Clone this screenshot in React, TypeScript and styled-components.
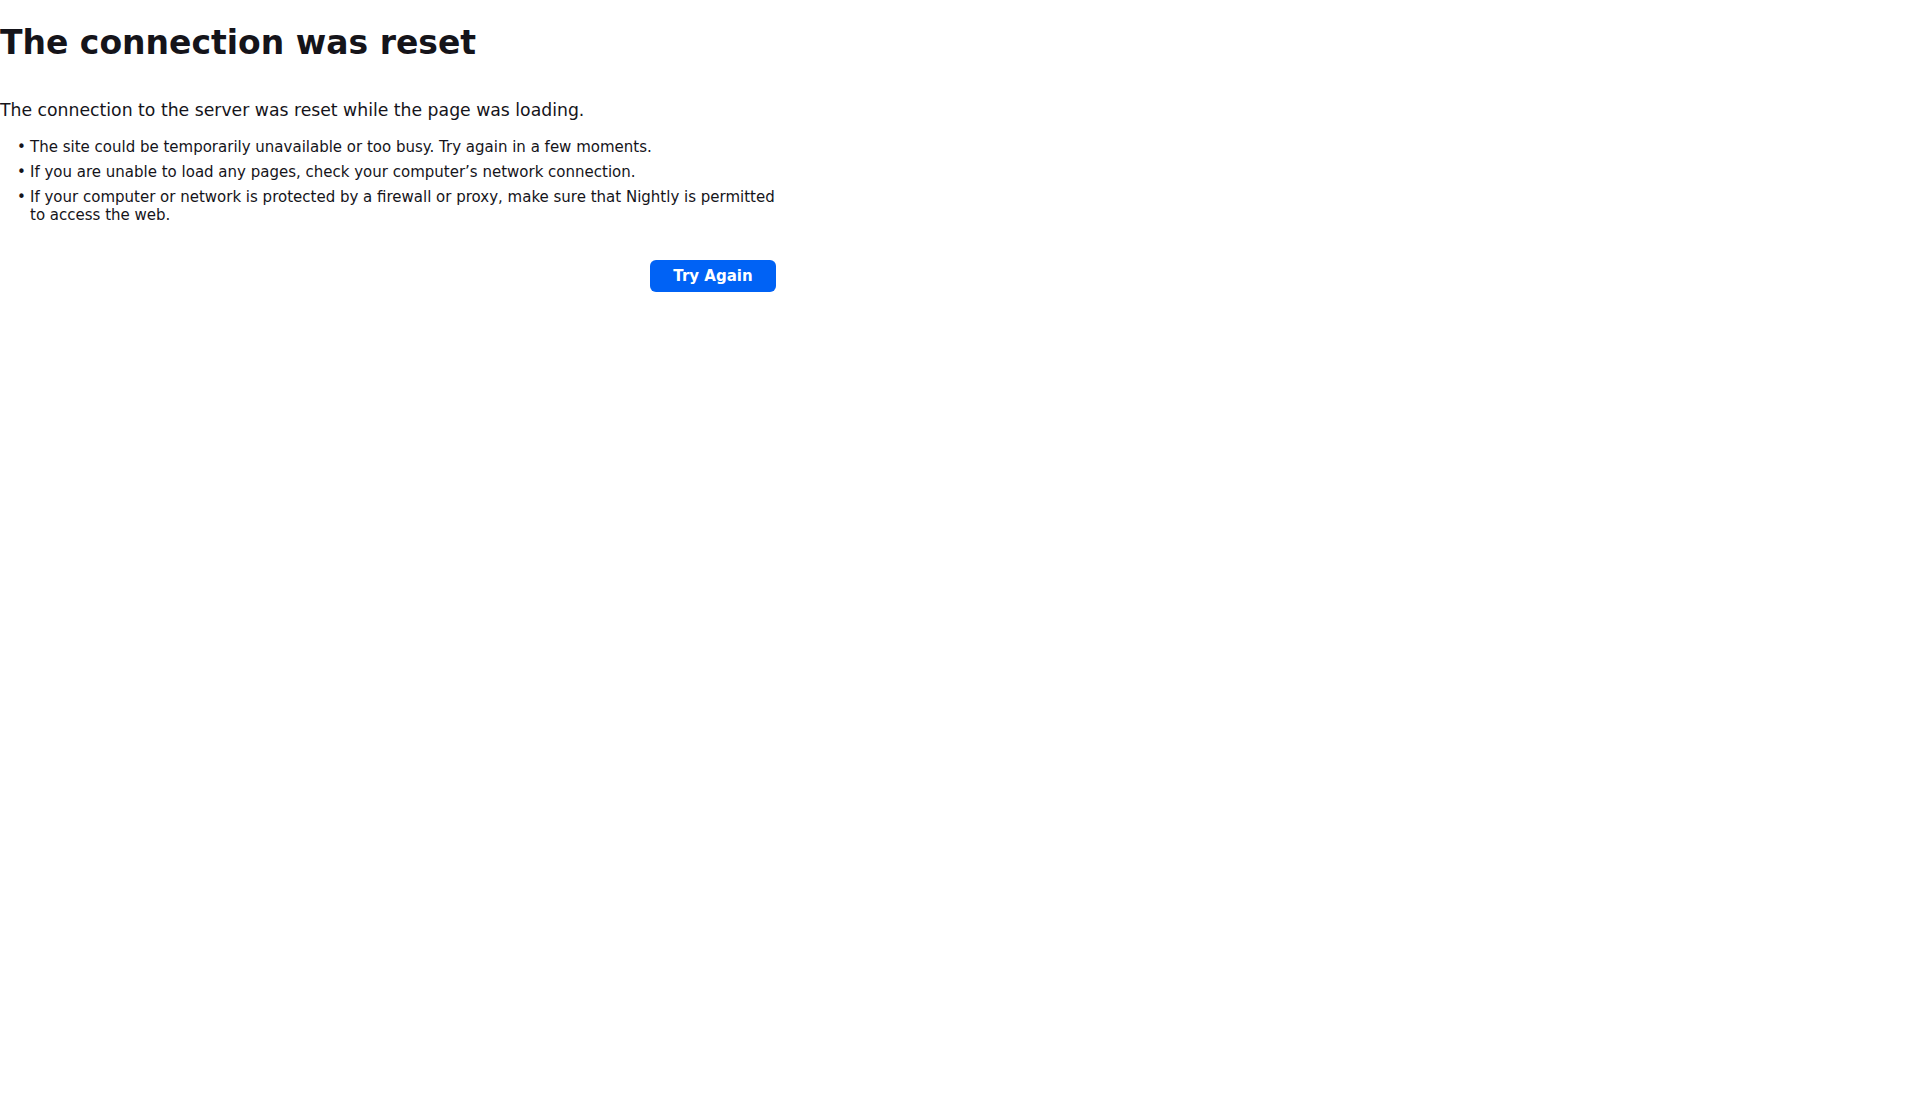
import { FC } from "react";
import styled, { createGlobalStyle } from "styled-components";

const GlobalStyle = createGlobalStyle`
  html, body {
    margin: 0;
    padding: 0;
    background: #ffffff;
  }
  body {
    font-family: "DejaVu Sans", "Noto Sans", sans-serif;
    color: #15141a;
    font-size: 15px;
  }
`;

const Container = styled.div`
  width: 776px;
  display: flex;
  flex-flow: column nowrap;
`;

const Title = styled.h1`
  margin: 0;
  padding-top: 22px;
  font-size: 33px;
  font-weight: 700;
  line-height: 1.3;
  color: #15141a;
`;

const ShortDesc = styled.p`
  margin: 33px 0 0;
  font-size: 17.25px;
  line-height: 1.4;
`;

const List = styled.ul`
  margin: 16px 0 0;
  padding-left: 30px;
  list-style: none;
  font-size: 15px;
  line-height: 1.2;
`;

const Item = styled.li`
  position: relative;
  margin-bottom: 7px;

  /* bullet sits a bit closer to the text than the default marker */
  &::before {
    content: "\\2022";
    position: absolute;
    left: -13px;
    top: 0;
  }
`;

const ButtonRow = styled.div`
  display: flex;
  justify-content: flex-end;
  margin-top: 29px;
`;

const Button = styled.button`
  font-family: inherit;
  font-size: 15px;
  font-weight: 700;
  color: #ffffff;
  background: #0062f5;
  border: none;
  border-radius: 6px;
  height: 32px;
  min-width: 126px;
  padding: 0 20px;
  cursor: pointer;
`;

const hints = [
  {
    id: 1,
    text: "The site could be temporarily unavailable or too busy. Try again in a few moments.",
  },
  {
    id: 2,
    text: "If you are unable to load any pages, check your computer\u2019s network connection.",
  },
  {
    id: 3,
    text: "If your computer or network is protected by a firewall or proxy, make sure that Nightly is permitted to access the web.",
  },
];

const App: FC = () => {
  return (
    <>
      <GlobalStyle />
      <Container>
        <Title>The connection was reset</Title>
        <ShortDesc>The connection to the server was reset while the page was loading.</ShortDesc>
        <List>
          {hints.map((item) => (
            <Item key={item.id}>{item.text}</Item>
          ))}
        </List>
        <ButtonRow>
          <Button>Try Again</Button>
        </ButtonRow>
      </Container>
    </>
  );
};

export default App;
